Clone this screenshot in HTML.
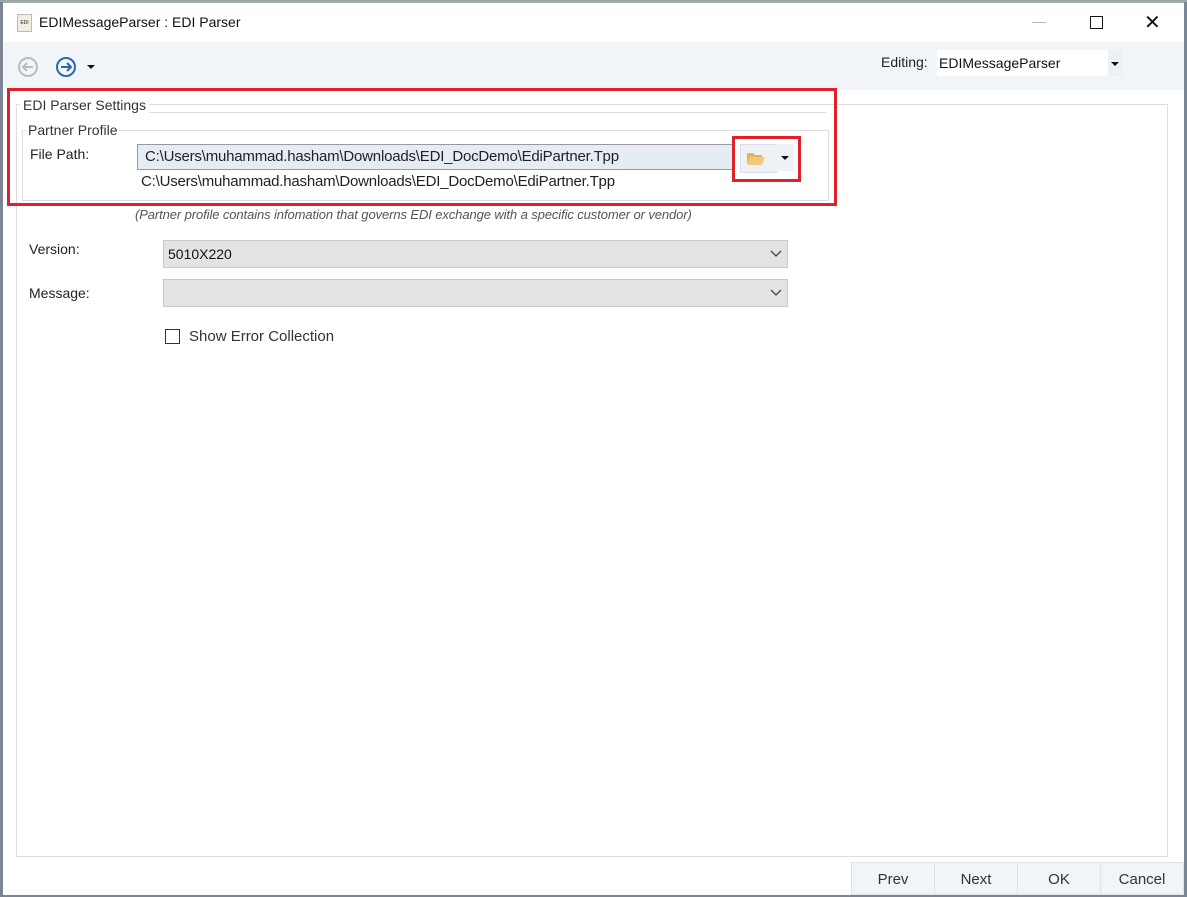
<!DOCTYPE html>
<html><head><style>
body{margin:0;width:1187px;height:897px;background:#7c8593;position:relative;overflow:hidden;font-family:"Liberation Sans",sans-serif;font-size:14px;color:#222}
.win{position:absolute;left:3px;top:2px;width:1181px;height:892px;background:#fff;border-top:1px solid #aaa}
.a{position:absolute}
.btn{position:absolute;top:862px;height:33px;background:#f1f4f8;border:1px solid #dfe3e8;text-align:center;line-height:33px;font-size:15px;color:#333;box-sizing:border-box}
</style></head><body>
<div class="win"></div>
<div class="a" style="left:0;top:0;width:1187px;height:2px;background:#9aa"></div>
<!-- title -->
<div class="a" style="left:17px;top:14px;width:13px;height:16px;background:#f2eee2;border:1px solid #bbb;font-size:5px;line-height:16px;text-align:center">EDI</div>
<div class="a" style="left:39px;top:14px;font-size:14px;color:#111">EDIMessageParser : EDI Parser</div>
<div class="a" style="left:1032px;top:22px;width:14px;height:1px;background:#bbb"></div>
<div class="a" style="left:1090px;top:16px;width:11px;height:11px;border:1px solid #111"></div>
<div class="a" style="left:1144px;top:10px;font-size:20px;color:#111">✕</div>
<!-- toolbar -->
<div class="a" style="left:4px;top:42px;width:1180px;height:48px;background:#f2f5f8"></div>
<svg class="a" style="left:17px;top:56px" width="22" height="22"><circle cx="11" cy="11" r="9" fill="none" stroke="#bbb" stroke-width="2"/><path d="M16 11H7M10 7l-4 4 4 4" fill="none" stroke="#bbb" stroke-width="2"/></svg>
<svg class="a" style="left:55px;top:56px" width="22" height="22"><circle cx="11" cy="11" r="9" fill="none" stroke="#2d6aa8" stroke-width="2"/><path d="M6 11h9M12 7l4 4-4 4" fill="none" stroke="#2d6aa8" stroke-width="2"/></svg>
<div class="a" style="left:87px;top:65px;border:4px solid transparent;border-top:4px solid #111;border-bottom:0"></div>
<div class="a" style="left:881px;top:54px;font-size:14px">Editing:</div>
<div class="a" style="left:937px;top:50px;width:185px;height:26px;background:#fff"></div>
<div class="a" style="left:939px;top:55px;font-size:14px;color:#111">EDIMessageParser</div>
<div class="a" style="left:1108px;top:50px;width:14px;height:26px;background:#eef1f4"></div>
<div class="a" style="left:1111px;top:62px;border:4px solid transparent;border-top:4px solid #111;border-bottom:0"></div>
<!-- content panel -->
<div class="a" style="left:16px;top:104px;width:1150px;height:751px;border:1px solid #ddd"></div>
<div class="a" style="left:20px;top:112px;width:806px;height:90px;border-top:1px solid #ddd"></div>
<div class="a" style="left:20px;top:97px;background:#fff;padding:0 3px;font-size:14px;color:#333">EDI Parser Settings</div>
<div class="a" style="left:22px;top:130px;width:805px;height:69px;border:1px solid #ddd"></div>
<div class="a" style="left:26px;top:122px;background:#fff;padding:0 2px;font-size:14px;color:#333">Partner Profile</div>
<div class="a" style="left:30px;top:146px;font-size:14px">File Path:</div>
<div class="a" style="left:137px;top:144px;width:598px;height:26px;background:#e5ecf3;border:1px solid #999;box-sizing:border-box"></div>
<div class="a" style="left:145px;top:148px;font-size:15px;color:#222;letter-spacing:-0.2px">C:\Users\muhammad.hasham\Downloads\EDI_DocDemo\EdiPartner.Tpp</div>
<div class="a" style="left:740px;top:144px;width:35px;height:27px;background:#eef2f6;border:1px solid #dde"></div>
<svg class="a" style="left:746px;top:150px" width="20" height="16"><path d="M1 3h6l2 2h7v3H4L1 14z" fill="#e3b45c"/><path d="M4 7h15l-3 8H1z" fill="#f2c978"/></svg>
<div class="a" style="left:776px;top:144px;width:18px;height:27px;background:#eef2f6"></div>
<div class="a" style="left:781px;top:156px;border:4px solid transparent;border-top:4px solid #111;border-bottom:0"></div>
<div class="a" style="left:141px;top:173px;font-size:15px;color:#222;letter-spacing:-0.2px">C:\Users\muhammad.hasham\Downloads\EDI_DocDemo\EdiPartner.Tpp</div>
<!-- red boxes -->
<div class="a" style="left:7px;top:88px;width:824px;height:112px;border:3px solid #e0202a"></div>
<div class="a" style="left:732px;top:136px;width:63px;height:40px;border:3px solid #e0202a"></div>
<div class="a" style="left:135px;top:207px;font-size:13px;font-style:italic;color:#555;letter-spacing:-0.1px">(Partner profile contains infomation that governs EDI exchange with a specific customer or vendor)</div>
<div class="a" style="left:29px;top:241px">Version:</div>
<div class="a" style="left:163px;top:240px;width:625px;height:28px;background:#e3e3e3;border:1px solid #c8c8c8;box-sizing:border-box"></div>
<div class="a" style="left:168px;top:246px;color:#111">5010X220</div>
<div class="a" style="left:29px;top:285px">Message:</div>
<div class="a" style="left:163px;top:279px;width:625px;height:28px;background:#e3e3e3;border:1px solid #c8c8c8;box-sizing:border-box"></div>
<svg class="a" style="left:770px;top:250px" width="12" height="8"><path d="M1 1l5 5 5-5" fill="none" stroke="#444" stroke-width="1.3"/></svg>
<svg class="a" style="left:770px;top:289px" width="12" height="8"><path d="M1 1l5 5 5-5" fill="none" stroke="#444" stroke-width="1.3"/></svg>
<div class="a" style="left:165px;top:329px;width:13px;height:13px;border:1px solid #333"></div>
<div class="a" style="left:189px;top:328px;font-size:15px;color:#333">Show Error Collection</div>
<!-- buttons -->
<div class="btn" style="left:851px;width:84px">Prev</div>
<div class="btn" style="left:934px;width:84px">Next</div>
<div class="btn" style="left:1017px;width:84px">OK</div>
<div class="btn" style="left:1100px;width:84px">Cancel</div>
</body></html>
